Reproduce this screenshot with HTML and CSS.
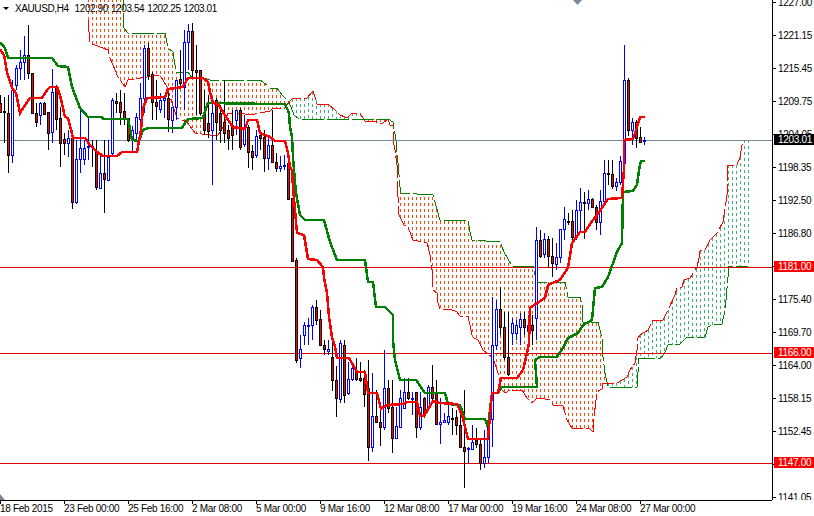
FILE: index.html
```html
<!DOCTYPE html>
<html lang="en">
<head>
    <meta charset="UTF-8">
    <title>XAUUSD,H4</title>
    <link rel="stylesheet" href="styles.css">
</head>
<body>
    <div class="terminal">
        <div class="plot">
            <svg id="chart" class="chart" width="772" height="500" viewBox="0 0 772 500">
                <g id="cloud"></g>
                <line class="level-now" x1="0" y1="140.5" x2="772" y2="140.5"></line>
                <line class="level" x1="0" y1="267.5" x2="772" y2="267.5"></line>
                <line class="level" x1="0" y1="353.5" x2="772" y2="353.5"></line>
                <line class="level" x1="0" y1="463.5" x2="772" y2="463.5"></line>
                <g id="candles"></g>
                <g id="lines"></g>
                <polygon class="shift" points="573,0 582,0 577.5,5"></polygon>
                <polygon class="shift" points="0,494 5,500 0,500"></polygon>
            </svg>
            <div class="title"><span class="title-arrow"></span>XAUUSD,H4  1202.90 1203.54 1202.25 1203.01</div>
        </div>
        <div class="price-axis">
            <ul class="prices">
                <li>1227.00</li>
                <li>1221.15</li>
                <li>1215.45</li>
                <li>1209.75</li>
                <li>1204.05</li>
                <li>1198.35</li>
                <li>1192.50</li>
                <li>1186.80</li>
                <li></li>
                <li>1175.40</li>
                <li>1169.70</li>
                <li>1164.00</li>
                <li>1158.15</li>
                <li>1152.45</li>
                <li></li>
                <li>1141.05</li>
            </ul>
            <div class="tag tag-now">1203.01</div>
            <div class="tag tag-1181">1181.00</div>
            <div class="tag tag-1166">1166.00</div>
            <div class="tag tag-1147">1147.00</div>
        </div>
        <div class="time-axis">
            <span>18 Feb 2015</span>
            <span>23 Feb 00:00</span>
            <span>25 Feb 16:00</span>
            <span>2 Mar 08:00</span>
            <span>5 Mar 00:00</span>
            <span>9 Mar 16:00</span>
            <span>12 Mar 08:00</span>
            <span>17 Mar 00:00</span>
            <span>19 Mar 16:00</span>
            <span>24 Mar 08:00</span>
            <span>27 Mar 00:00</span>
        </div>
    </div>
    <script src="script.js"></script>
</body>
</html>
```
FILE: styles.css
```css
body {
    margin: 0;
    background-color: #fff;
    color: #000;
    font-family: "Liberation Sans", Arial, sans-serif;
    font-size: 10px;
    letter-spacing: -0.3px;
    overflow: hidden;
}
.terminal {
    display: grid;
    grid-template-columns: 772px 42px;
    grid-template-rows: 500px 16px;
    width: 814px;
    height: 516px;
}
.plot {
    position: relative;
    overflow: hidden;
}
.chart {
    display: block;
}
.title {
    position: absolute;
    top: 0;
    left: 3px;
    display: flex;
    align-items: center;
    height: 16px;
    letter-spacing: -0.4px;
    word-spacing: 0.6px;
    white-space: pre;
}
.title-arrow {
    width: 0;
    height: 0;
    margin-right: 6px;
    border-left: 3px solid transparent;
    border-right: 3px solid transparent;
    border-top: 3px solid #000;
}

/* chart drawing */
.level-now {
    stroke: #778899;
    stroke-width: 1;
}
.level {
    stroke: #e00000;
    stroke-width: 1;
}
.shift {
    fill: #778899;
}
.candle {
    shape-rendering: crispEdges;
    stroke-width: 1;
}
.bull {
    stroke: #0000ff;
    fill: #fff;
}
.bear {
    stroke: #000;
    fill: #ff0000;
}
.col-orange, .col-green {
    stroke-width: 1;
    stroke-dasharray: 3 3;
    shape-rendering: crispEdges;
}
.col-orange {
    stroke: #ff4500;
}
.col-green {
    stroke: #3cb371;
}
.edge, .fast, .slow {
    fill: none;
    shape-rendering: crispEdges;
}
.edge {
    stroke-width: 1;
    stroke-dasharray: 22 3;
}
.edge-red {
    stroke: #ff0000;
}
.edge-green {
    stroke: #008000;
}
.fast {
    stroke: #ff0000;
    stroke-width: 2.5;
}
.slow {
    stroke: #008000;
    stroke-width: 2.5;
}

/* price scale */
.price-axis {
    position: relative;
    overflow: hidden;
    border-left: 1px solid #000;
}
.prices {
    list-style: none;
    margin: -14px 0 0;
    padding: 0;
}
.prices li {
    position: relative;
    height: 33px;
    line-height: 33px;
    padding-left: 5px;
}
.prices li::before {
    content: "";
    position: absolute;
    left: 0;
    top: 16px;
    width: 3px;
    height: 1px;
    background-color: #000;
}
.tag {
    position: absolute;
    left: 1px;
    width: 36px;
    height: 11px;
    padding-left: 4px;
    line-height: 11px;
    color: #fff;
    background-color: #ff0000;
}
.tag-now {
    top: 134px;
    background-color: #000;
}
.tag-1181 {
    top: 261px;
}
.tag-1166 {
    top: 347px;
}
.tag-1147 {
    top: 457px;
}

/* time scale */
.time-axis {
    display: flex;
    overflow: hidden;
    border-top: 1px solid #000;
    line-height: 16px;
}
.time-axis span {
    position: relative;
    flex: 0 0 64px;
    white-space: nowrap;
}
.time-axis span::before {
    content: "";
    position: absolute;
    left: 0;
    top: 0;
    width: 1px;
    height: 3px;
    background-color: #000;
}
```
FILE: script.js
```js
// Candles, one every 4px from x=0: [high, bodyTop, bodyBottom, low, 1 = bull]
const candles = [
    [95,103,112,113,0],[97,111,112,143,0],[95,113,155,173,0],[80,90,155,163,1],[65,68,85,90,1],
    [50,62,68,80,1],[36,55,62,80,1],[25,55,73,79,0],[73,73,113,114,0],[103,113,122,127,0],
    [102,103,115,125,1],[102,103,114,115,0],[112,112,133,150,0],[69,92,132,143,1],[85,88,119,130,0],
    [107,118,143,167,0],[133,139,143,155,0],[130,138,143,157,1],[130,138,202,209,0],[140,159,202,204,1],
    [107,148,159,173,1],[140,148,159,165,1],[118,146,147,160,1],[140,146,147,167,0],[140,152,187,190,0],
    [153,173,188,189,1],[140,173,179,213,0],[140,157,180,181,1],[98,100,153,155,1],[93,101,103,113,0],
    [90,102,112,125,0],[93,111,119,125,0],[118,118,140,142,0],[126,130,140,152,1],[113,117,133,142,1],
    [83,98,119,130,1],[45,48,98,113,1],[43,48,75,80,0],[72,74,102,120,0],[80,102,106,120,0],
    [93,100,109,113,1],[95,98,100,118,1],[93,98,119,132,0],[107,107,120,133,1],[80,80,107,120,1],
    [50,79,83,88,0],[30,42,87,110,1],[24,31,42,70,1],[23,31,70,77,0],[45,70,72,115,0],
    [70,70,113,115,0],[90,113,130,135,0],[95,123,131,138,0],[98,113,130,185,1],[98,100,122,140,0],
    [105,113,130,143,0],[80,122,133,143,0],[125,130,138,150,0],[110,125,135,150,0],[110,110,120,135,1],
    [108,110,147,150,0],[115,127,144,147,1],[125,127,152,168,0],[145,151,157,170,0],[130,136,155,158,1],
    [130,135,138,150,0],[130,137,158,172,0],[135,145,158,170,1],[110,145,162,163,0],[153,162,168,172,0],
    [156,166,168,172,1],[155,165,166,170,1],[160,163,199,200,0],[198,198,261,261,0],[258,260,360,363,0],
    [335,349,358,368,1],[322,325,335,345,1],[318,325,326,345,1],[305,307,325,340,1],[300,307,320,325,0],
    [310,319,345,346,0],[340,345,349,355,0],[340,349,351,355,1],[342,357,380,391,0],[366,380,398,417,0],
    [340,343,399,403,1],[340,345,395,403,0],[362,379,393,395,1],[363,368,379,381,1],[358,370,379,381,0],
    [362,378,380,382,0],[370,378,394,407,0],[360,388,447,461,0],[373,416,447,452,1],[390,416,422,423,0],
    [410,422,427,446,0],[350,388,427,430,1],[380,388,408,413,0],[380,407,438,453,0],[407,426,438,438,1],
    [390,398,427,428,1],[378,392,408,409,1],[378,392,398,400,0],[392,398,399,415,1],[392,392,427,438,0],
    [392,407,427,430,1],[397,398,415,418,0],[385,387,407,410,1],[365,387,398,400,0],[380,393,424,425,0],
    [398,422,424,444,1],[413,420,422,423,1],[405,416,422,425,1],[408,418,419,435,0],[410,417,425,435,0],
    [415,425,447,448,0],[390,447,451,488,0],[447,448,449,463,1],[425,442,449,450,1],[428,440,444,448,0],
    [440,444,463,470,0],[430,457,463,468,1],[418,420,457,463,1],[297,345,419,447,1],[300,309,345,350,1],
    [287,309,327,335,0],[312,327,357,360,0],[312,357,374,376,0],[318,323,333,345,1],[320,325,333,340,1],
    [313,319,327,345,1],[312,319,327,335,0],[315,325,331,340,1],[315,325,330,345,0],[227,240,318,340,1],
    [230,240,256,258,0],[233,239,254,258,1],[236,239,256,268,0],[238,256,263,277,0],[243,257,264,270,1],
    [229,229,257,263,1],[207,219,229,240,1],[213,221,222,225,0],[210,221,237,240,0],[200,210,237,240,1],
    [188,202,210,233,1],[192,202,203,239,0],[190,199,203,210,1],[198,199,207,208,0],[205,207,222,230,0],
    [190,201,222,235,1],[160,173,201,203,1],[160,173,174,185,0],[160,174,186,189,0],[178,182,186,191,1],
    [156,161,182,185,1],[45,80,163,167,1],[78,80,130,136,0],[118,122,130,145,1],[120,122,138,148,0],
    [127,137,142,143,0],[137,140,141,145,1]
];

// Ichimoku lines, [x, y] pairs flattened
const fast = [0,49,4,55,7,72,12,88,16,93,20,113,25,105,30,98,42,98,47,90,50,87,57,87,60,95,65,117,68,118,73,138,85,138,90,145,97,152,103,156,117,156,122,152,137,152,141,130,143,108,147,98,165,97,168,89,183,87,188,78,203,78,208,82,210,92,213,103,218,104,223,112,233,127,245,129,248,120,257,120,260,133,270,137,275,141,285,141,288,153,290,167,292,170,293,187,295,210,297,233,304,235,308,259,317,260,323,267,324,278,327,293,329,317,332,337,335,347,337,358,349,358,357,372,365,372,368,393,377,393,381,409,387,405,403,404,407,402,417,402,420,416,424,416,433,401,440,403,457,404,462,415,468,439,488,439,492,393,498,393,501,378,517,378,523,370,527,353,529,343,530,308,545,298,548,285,557,281,560,280,568,268,572,243,580,232,585,232,593,220,598,214,608,199,622,198,624,168,624,140,633,139,637,127,640,117,645,117];
const slow = [0,42,5,48,8,58,52,58,58,66,68,67,72,87,80,108,88,117,102,117,103,119,128,119,132,140,139,141,143,130,148,128,182,128,188,119,203,118,208,103,270,104,285,104,289,113,290,127,292,137,293,157,294,170,296,193,300,215,305,220,324,220,330,242,337,260,365,260,368,282,373,282,376,307,385,307,393,315,393,340,395,360,400,380,416,380,425,393,445,393,448,404,460,405,465,419,485,419,488,427,492,393,498,393,502,387,537,387,535,360,540,357,557,357,563,348,568,338,578,333,583,325,592,320,595,288,602,287,608,277,617,252,622,243,623,192,633,191,637,185,639,170,641,161,645,161];

// Cloud edges as [x, y] pairs, both run across the whole cloud
const edgeGreen = [88,-2,123,-2,124,28,128,33,165,33,168,48,173,52,176,72,188,72,192,78,203,78,210,80,260,80,267,85,270,88,277,88,282,95,289,102,294,115,299,119,388,119,393,122,396,140,398,163,400,187,401,193,433,195,438,213,440,220,468,220,470,232,472,240,500,242,504,252,512,266,533,266,535,275,537,282,565,282,568,297,580,297,582,305,583,322,598,322,602,338,603,357,605,373,608,387,637,387,639,358,661,358,665,352,668,345,680,344,682,342,687,337,705,337,708,327,713,324,722,324,725,310,726,300,728,277,728,266,748,266];
const edgeRed = [88,20,90,43,108,50,110,58,118,77,125,87,128,80,147,77,160,75,167,87,177,118,187,122,195,133,217,136,222,130,228,113,240,113,250,115,270,111,273,108,285,108,289,102,292,99,295,98,307,98,312,92,313,91,316,100,317,104,328,104,336,111,340,115,345,117,348,117,352,113,360,113,363,118,365,121,373,121,380,123,383,123,388,119,390,125,393,125,393,140,395,150,397,165,398,197,399,215,404,225,408,227,413,240,427,243,430,255,432,270,433,290,437,293,438,303,440,309,450,309,457,312,460,316,468,316,471,330,472,337,478,340,483,350,493,358,498,373,502,390,505,393,510,390,522,390,527,398,532,403,537,398,540,398,550,400,553,405,563,406,567,420,572,428,590,429,593,432,594,417,597,392,602,389,603,383,617,383,627,377,630,370,635,363,637,350,638,338,640,335,648,330,652,322,653,320,663,320,668,310,675,295,677,288,682,287,684,280,690,278,697,267,699,258,700,251,705,250,710,240,717,233,723,222,724,215,727,195,728,165,737,165,740,157,742,145,744,140,748,140];

const SVG_NS = "http://www.w3.org/2000/svg";

function add(parent, tag, attrs) {
    const el = document.createElementNS(SVG_NS, tag);
    for (const name in attrs) {
        el.setAttribute(name, attrs[name]);
    }
    parent.appendChild(el);
}

function toPoints(flat) {
    const pairs = [];
    for (let i = 0; i < flat.length; i += 2) {
        pairs.push(flat[i] + "," + flat[i + 1]);
    }
    return pairs.join(" ");
}

// y of an edge at a given x
function yAt(flat, x) {
    for (let i = 0; i < flat.length - 2; i += 2) {
        if (x >= flat[i] && x <= flat[i + 2]) {
            const span = flat[i + 2] - flat[i];
            if (span === 0) return flat[i + 1];
            return flat[i + 1] + (flat[i + 3] - flat[i + 1]) * (x - flat[i]) / span;
        }
    }
    return null;
}

// Cloud columns: green where the red edge is on top, orange otherwise.
// The orange dashes sit on one grid, the green ones start at their own top.
const cloud = document.getElementById("cloud");
for (let x = 88; x <= 748; x += 4) {
    const g = Math.round(yAt(edgeGreen, x));
    const r = Math.round(yAt(edgeRed, x));
    if (g === r) continue;
    const top = Math.min(g, r);
    add(cloud, "line", {
        class: r < g ? "col-green" : "col-orange",
        x1: x + 0.5, x2: x + 0.5,
        y1: top, y2: Math.max(g, r),
        "stroke-dashoffset": r < g ? 0 : (top + 1) % 6
    });
}
add(cloud, "polyline", { class: "edge edge-red", points: toPoints(edgeRed) });
add(cloud, "polyline", { class: "edge edge-green", points: toPoints(edgeGreen) });

// Candles
const group = document.getElementById("candles");
candles.forEach(function (c, i) {
    const x = i * 4 + 0.5;
    const type = c[4] ? "candle bull" : "candle bear";
    add(group, "line", { class: type, x1: x, x2: x, y1: c[0], y2: c[3] });
    add(group, "rect", { class: type, x: x - 1, y: c[1] + 0.5, width: 2, height: Math.max(c[2] - c[1], 1) });
});

// Tenkan and kijun on top
const lines = document.getElementById("lines");
add(lines, "polyline", { class: "slow", points: toPoints(slow) });
add(lines, "polyline", { class: "fast", points: toPoints(fast) });
```
